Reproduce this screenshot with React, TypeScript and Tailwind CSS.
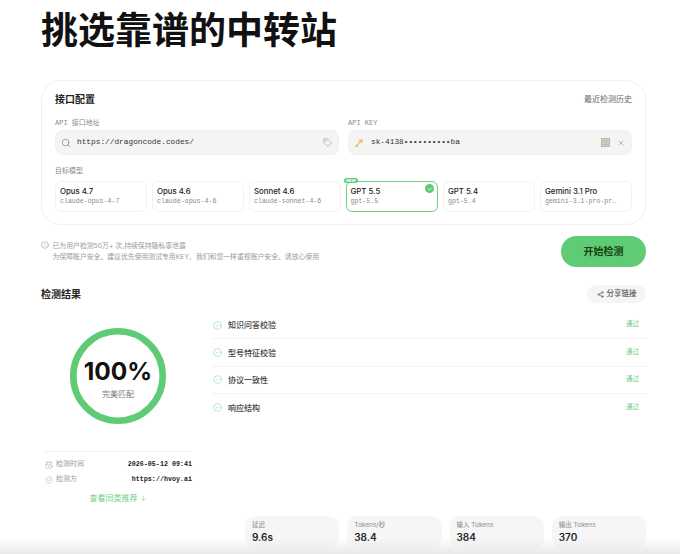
import { ArrowDown, CalendarClock, Check, CircleCheck, Info, Search, Share2, ShieldCheck, Tag, X } from "lucide-react";

const sans = "font-['Inter','Noto_Sans_CJK_SC',sans-serif]";
const mono = "font-['Liberation_Mono','Noto_Sans_CJK_SC',monospace]";

const models = [
  { name: "Opus 4.7", id: "claude-opus-4-7" },
  { name: "Opus 4.6", id: "claude-opus-4-6" },
  { name: "Sonnet 4.6", id: "claude-sonnet-4-6" },
  { name: "GPT 5.5", id: "gpt-5.5", active: true },
  { name: "GPT 5.4", id: "gpt-5.4" },
  { name: "Gemini 3.1 Pro", id: "gemini-3.1-pro-pr…" },
];
const checks = ["知识问答校验", "型号特征校验", "协议一致性", "响应结构"];
const stats = [
  { label: "延迟", value: "9.6s" },
  { label: "Tokens/秒", value: "38.4" },
  { label: "输入 Tokens", value: "384" },
  { label: "输出 Tokens", value: "370" },
];

function KeyIcon() {
  return (
    <svg width="10" height="10" viewBox="0 0 12 12" className="shrink-0">
      <circle cx="8.4" cy="3.6" r="2.5" fill="#ecc873" />
      <path d="M6.8 5.2 1.6 10.4M3 9l1.3 1.2M4.2 7.8l1 1" stroke="#e3b95c" strokeWidth="1.4" fill="none" />
    </svg>
  );
}

function PadIcon() {
  return (
    <svg width="9" height="9" viewBox="0 0 9 9" className="shrink-0">
      <rect x="0.5" y="0.5" width="8" height="8" fill="#d3cfc3" stroke="#a5a196" strokeWidth="0.7" />
      <path d="M2 2.5h5M2 4.5h5M2 6.5h5" stroke="#a8a499" strokeWidth="0.5" />
    </svg>
  );
}

function Gauge() {
  return (
    <div className="relative w-[96px] h-[96px]">
      <svg width="96" height="96" viewBox="0 0 96 96" className="absolute inset-0">
        <circle cx="48" cy="48" r="44.7" fill="none" stroke="#5fcb75" strokeWidth="6.6" />
      </svg>
      <div className="absolute inset-0 flex flex-col items-center pt-[29px]">
        <span className="text-[24.5px] leading-[28px] font-bold text-[#111111]">100%</span>
        <span className="text-[8px] leading-[12px] mt-[3px] text-[#777777]">完美匹配</span>
      </div>
    </div>
  );
}

export default function App() {
  return (
    <div className={`${sans} relative h-[554px] w-[680px] overflow-hidden bg-white pl-[41px] pr-[34px]`}>
      <h1 className="pt-[9px] text-[37px] leading-[44px] font-bold text-[#111111]">挑选靠谱的中转站</h1>

      <section className="mt-[27px] h-[145px] rounded-[20px] border border-[#f0f0f0] px-[13px] pt-[10px]">
        <div className="flex items-center justify-between h-[16px]">
          <span className="text-[10px] font-semibold text-[#222222]">接口配置</span>
          <span className="text-[8px] text-[#666666]">最近检测历史</span>
        </div>
        <div className="mt-[11px] grid grid-cols-2 gap-[9px]">
          <div>
            <div className={`${mono} text-[7px] leading-[10px] text-[#8a8a8a]`}>API 接口地址</div>
            <div className="mt-[2px] flex h-[25px] items-center rounded-[8px] border border-[#f0f0f0] bg-[#f4f4f5] pl-[5px] pr-[6px]">
              <Search size={10} className="text-[#777777]" strokeWidth={1.5} />
              <span className={`${mono} ml-[6px] flex-1 text-[7.8px] text-[#333333]`}>https://dragoncode.codes/</span>
              <Tag size={9} className="text-[#888888]" strokeWidth={1.5} />
            </div>
          </div>
          <div>
            <div className={`${mono} text-[7px] leading-[10px] text-[#8a8a8a]`}>API KEY</div>
            <div className="mt-[2px] flex h-[25px] items-center rounded-[8px] border border-[#f0f0f0] bg-[#f4f4f5] pl-[5px] pr-[6px]">
              <KeyIcon />
              <span className={`${mono} ml-[7px] flex-1 text-[7.8px] text-[#333333]`}>sk-4138••••••••••ba</span>
              <PadIcon />
              <X size={8} className="ml-[7px] text-[#777777]" strokeWidth={1.5} />
            </div>
          </div>
        </div>
        <div className="mt-[11px] text-[7px] leading-[10px] text-[#8a8a8a]">目标模型</div>
        <div className="mt-[5px] grid grid-cols-6 gap-[5px]">
          {models.map((m) => (
            <div
              key={m.name}
              className={`relative flex h-[31px] flex-col justify-center rounded-[6px] ${
                m.active ? "border-[1.5px] border-[#6fcf82] pl-[3.5px]" : "border border-[#f3f3f3] pl-[4px]"
              }`}
            >
              {m.active && (
                <>
                  <span className="absolute left-[-3px] top-[-4px] rounded-full bg-[#5fcb75] px-[2px] text-[4px] leading-[5px] font-bold text-white">NEW</span>
                  <span className="absolute right-[3px] top-[2px] flex h-[9px] w-[9px] items-center justify-center rounded-full bg-[#5fcb75]">
                    <Check size={6} className="text-white" strokeWidth={3} />
                  </span>
                </>
              )}
              <span className="text-[7.8px] leading-[11px] font-medium text-[#222222]">{m.name}</span>
              <span className={`${mono} text-[6.6px] leading-[10px] text-[#8a8a8a]`}>{m.id}</span>
            </div>
          ))}
        </div>
      </section>

      <div className="mt-[11px] flex items-start justify-between">
        <div className="flex pt-[4px] text-[6.85px] leading-[11px] text-[#9a9a9a]">
          <Info size={8} className="mt-[1px] mr-[3.5px] shrink-0 text-[#777777]" strokeWidth={1.3} />
          <div>
            <div>已为用户检测50万+ 次,持续保持隐私零泄露</div>
            <div>为保障账户安全、建议优先使用测试专用KEY。我们和您一样重视账户安全、请放心使用</div>
          </div>
        </div>
        <button className="h-[31px] w-[85px] rounded-full bg-[#5fcb75] text-[10px] font-semibold text-[#14430f]">开始检测</button>
      </div>

      <div className="mt-[18px] flex h-[18px] items-center justify-between">
        <span className="text-[10px] font-semibold text-[#222222]">检测结果</span>
        <span className="flex h-[18px] w-[59px] items-center justify-center rounded-full bg-[#f5f5f5] text-[7.5px] font-medium text-[#555555]">
          <Share2 size={7} className="mr-[3px]" strokeWidth={2} />
          分享链接
        </span>
      </div>

      <div className="mt-[9px] grid grid-cols-[151px_1fr] gap-x-[20px]">
        <div className="pl-[3px]">
          <div className="flex justify-center pt-[16px] pb-[27px]">
            <Gauge />
          </div>
          <div className="border-t border-[#f2f2f2] pt-[5px]">
            <div className="flex h-[15px] items-center justify-between">
              <span className="flex items-center text-[7px] text-[#9a9a9a]">
                <CalendarClock size={8} className="ml-[1px] mr-[3px]" strokeWidth={1.3} />检测时间
              </span>
              <span className={`${mono} text-[6.7px] font-bold text-[#222222]`}>2026-05-12 09:41</span>
            </div>
            <div className="flex h-[15px] items-center justify-between">
              <span className="flex items-center text-[7px] text-[#9a9a9a]">
                <ShieldCheck size={8} className="ml-[1px] mr-[3px]" strokeWidth={1.3} />检测方
              </span>
              <span className={`${mono} text-[6.7px] font-bold text-[#222222]`}>https://hvoy.ai</span>
            </div>
            <div className="mt-[5px] flex h-[12px] items-center justify-center text-[8px] text-[#6fcf82]">
              查看同类推荐
              <ArrowDown size={7} className="ml-[2px]" strokeWidth={1.5} />
            </div>
          </div>
        </div>

        <div>
          <div>
            {checks.map((c, i) => (
              <div
                key={c}
                className={`flex h-[27.4px] items-center justify-between pr-[7px] ${i < 3 ? "border-b border-[#f3f3f3]" : ""}`}
              >
                <span className="flex items-center text-[8px] font-medium text-[#444444]">
                  <CircleCheck size={9} className="ml-[1px] mr-[6px] text-[#6fcf82]" strokeWidth={1.3} />
                  {c}
                </span>
                <span className="text-[6.5px] text-[#6fcf82]">通过</span>
              </div>
            ))}
          </div>
          <div className="mt-[94px] ml-[33px] grid grid-cols-4 gap-[8px]">
            {stats.map((s) => (
              <div key={s.label} className="h-[32px] rounded-[10px] bg-[#f6f6f6] pl-[7px] pt-[5px]">
                <div className="text-[6.5px] leading-[9px] text-[#8a8a8a]">{s.label}</div>
                <div className="mt-[1px] text-[10px] leading-[13px] font-semibold text-[#222222]">{s.value}</div>
              </div>
            ))}
          </div>
        </div>
      </div>

      <div className="pointer-events-none absolute inset-x-0 bottom-0 h-[16px] bg-gradient-to-b from-transparent to-[#e9e9e9]" />
    </div>
  );
}
